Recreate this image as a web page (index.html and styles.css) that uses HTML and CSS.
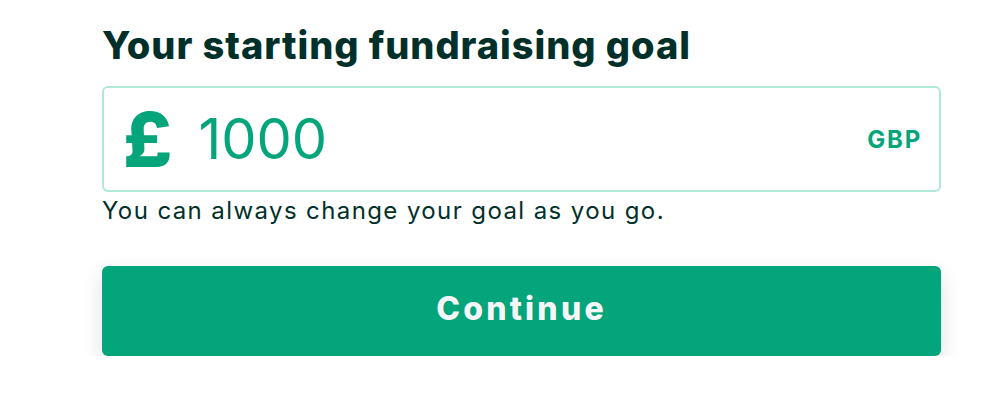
FILE: index.html
```html
<!DOCTYPE html>
<html lang="en">
<head>
  <meta charset="UTF-8" />
  <meta name="viewport" content="width=device-width, initial-scale=1" />
  <title>Fundraising goal</title>
  <link rel="stylesheet" href="styles.css">
</head>
<body>

  <div class="goal">
    <h2 class="goal-title">Your starting fundraising goal</h2>

    <label class="goal-field" for="goalAmount">
      <span class="goal-symbol">£</span>
      <input type="text" id="goalAmount" class="goal-input" value="1000" />
      <span class="goal-currency">GBP</span>
    </label>

    <p class="goal-hint">You can always change your goal as you go.</p>

    <button class="goal-continue">Continue</button>
  </div>

</body>
</html>
```

FILE: styles.css
```css
body {
  margin: 0;
  padding: 0;
  background-color: #ffffff;
  color: #01302b;
  font-family: Inter, "Noto Sans", sans-serif;
}
.goal {
  width: 839px;
  margin-left: 102px;
  padding-top: 23px;
}
.goal-title {
  margin: 0 0 19px;
  font-size: 38px;
  line-height: 44px;
  font-weight: 800;
  letter-spacing: 0.95px;
  color: #01302b;
}
.goal-field {
  display: flex;
  align-items: center;
  height: 106px;
  box-sizing: border-box;
  border: 2px solid #aee9d5;
  border-radius: 6px;
  padding: 0 17px 0 19px;
}
.goal-symbol {
  font-size: 76px;
  font-weight: 800;
  color: #04a57a;
  line-height: 1;
}
.goal-input {
  flex: 1;
  min-width: 0;
  margin-left: 26px;
  padding: 0;
  border: none;
  outline: none;
  background: transparent;
  font-family: inherit;
  font-size: 56px;
  font-weight: 400;
  color: #04a57a;
}
.goal-currency {
  font-size: 24px;
  font-weight: 700;
  letter-spacing: 1.8px;
  color: #04a57a;
}
.goal-hint {
  margin: 5px 0 0;
  font-size: 24px;
  line-height: 28px;
  letter-spacing: 1.4px;
  color: #01302b;
}
.goal-continue {
  display: block;
  width: 100%;
  height: 90px;
  margin-top: 41px;
  padding: 0 0 5px;
  border: none;
  border-radius: 6px;
  background-color: #04a57a;
  color: #f6f6f8;
  font-family: inherit;
  font-size: 32px;
  font-weight: 800;
  letter-spacing: 3.2px;
  cursor: pointer;
  box-shadow: 0 8px 22px rgba(0, 0, 0, 0.12);
}
```
